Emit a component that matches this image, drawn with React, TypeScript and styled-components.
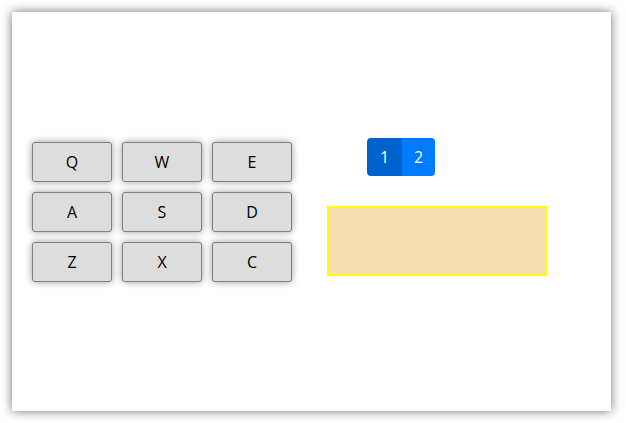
import React from "react";
import styled, { createGlobalStyle } from "styled-components";

const Global = createGlobalStyle`
  html, body { margin: 0; padding: 0; background: #ffffff; }
  body { font-family: "Open Sans", "Noto Sans", "Liberation Sans", sans-serif; }
`;

const Page = styled.div`
  box-sizing: border-box;
  width: 626px;
  height: 423px;
  padding: 12px 0 0 12px;
  overflow: hidden;
`;

const Panel = styled.div`
  box-sizing: border-box;
  width: 599px;
  height: 399px;
  background: #ffffff;
  box-shadow: 0 0 10px rgba(0, 0, 0, 0.55);
  display: flex;
  align-items: flex-start;
  padding: 126px 0 0 20px;
`;

const KeyGrid = styled.div`
  margin-top: 4px;
  display: grid;
  grid-template-columns: repeat(3, 80px);
  grid-auto-rows: 40px;
  gap: 10px;
`;

const Key = styled.button`
  box-sizing: border-box;
  margin: 0;
  padding: 0;
  background: #dddddd;
  border: 1px solid #808080;
  border-radius: 3px;
  box-shadow: 0 0 7px rgba(0, 0, 0, 0.4);
  font-family: "Open Sans", "Noto Sans", sans-serif;
  font-size: 16px;
  color: #000000;
  display: flex;
  align-items: center;
  justify-content: center;
`;

const RightColumn = styled.div`
  margin-left: 35px;
  display: flex;
  flex-direction: column;
  align-items: flex-start;
  gap: 30px;
`;

const Pagination = styled.div`
  margin-left: 40px;
  display: flex;
  border-radius: 4px;
  overflow: hidden;
`;

const PageButton = styled.div<{ $active?: boolean; $w: number }>`
  box-sizing: border-box;
  width: ${(p) => p.$w}px;
  height: 38px;
  display: flex;
  align-items: center;
  justify-content: center;
  background: ${(p) => (p.$active ? "#0062cc" : "#007bff")};
  color: #ffffff;
  font-family: "Open Sans", "Noto Sans", sans-serif;
  font-size: 16px;
`;

const WheatBox = styled.div`
  box-sizing: border-box;
  width: 220px;
  height: 70px;
  background: #f5deb3;
  border: 2px solid #ffff00;
`;

const keys = ["Q", "W", "E", "A", "S", "D", "Z", "X", "C"];

export default function App() {
  return (
    <>
      <Global />
      <Page>
        <Panel>
          <KeyGrid>
            {keys.map((k) => (
              <Key key={k}>{k}</Key>
            ))}
          </KeyGrid>
          <RightColumn>
            <Pagination>
              <PageButton $active $w={35}>1</PageButton>
              <PageButton $w={33}>2</PageButton>
            </Pagination>
            <WheatBox />
          </RightColumn>
        </Panel>
      </Page>
    </>
  );
}
